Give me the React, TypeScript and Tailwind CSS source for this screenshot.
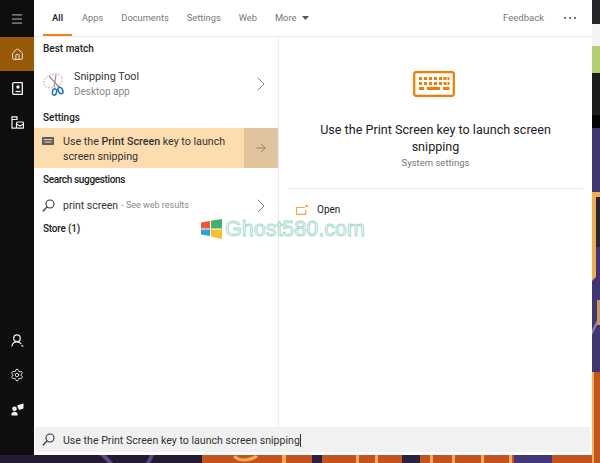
import React from "react";
import { Menu, Home, Settings, ChevronRight, ArrowRight } from "lucide-react";

function Wallpaper() {
  return (
    <svg className="absolute inset-0" width="600" height="463" viewBox="0 0 600 463">
      <rect width="600" height="463" fill="#c4541f" />
      <rect x="0" y="455" width="202" height="8" fill="#231a33" />
      <path d="M100 455l8 8h5l-7-8zM150 455l-4 8h4l4-8z" fill="#5b4a86" />
      <rect x="592" y="0" width="8" height="24" fill="#26262a" />
      <rect x="592" y="24" width="8" height="22" fill="#f4f4f4" />
      <rect x="592" y="46" width="8" height="27" fill="#b4cf72" />
      <rect x="592" y="73" width="8" height="42" fill="#1d1d20" />
      <rect x="592" y="115" width="8" height="13" fill="#050505" />
      <rect x="592" y="128" width="8" height="244" fill="#3f3672" />
      <path d="M592 192h8v5h-4v80l-4 4z" fill="#eeae4e" />
      <rect x="596" y="197" width="4" height="50" fill="#2a2436" />
      <path d="M592 330l8-16v5l-8 16z" fill="#8d85a8" />
      <rect x="597" y="300" width="3" height="25" fill="#c79a58" />
      <rect x="592" y="372" width="8" height="91" fill="#c4541f" />
      <rect x="592" y="372" width="2" height="91" fill="#f3ae55" />
      <g fill="#f3ae55">
        <path d="M236 455c2 4 10 5 20 0l2 2c-8 6-20 6-25 0z" />
        <rect x="282" y="455" width="4" height="8" />
        <rect x="356" y="455" width="3" height="8" />
        <rect x="375" y="455" width="3" height="8" />
        <rect x="430" y="455" width="3" height="8" />
        <rect x="452" y="455" width="3" height="8" />
        <rect x="481" y="455" width="3" height="8" />
        <rect x="509" y="455" width="3" height="8" />
      </g>
      <g fill="#2b2140">
        <rect x="312" y="455" width="10" height="8" />
        <rect x="402" y="455" width="18" height="8" />
        <rect x="514" y="455" width="38" height="8" fill="#43367a" />
      </g>
    </svg>
  );
}

function SearchGlyph() {
  return (
    <svg width="13" height="13" viewBox="0 0 13 13" fill="none" stroke="#333" strokeWidth="1.1" className="shrink-0">
      <circle cx="8" cy="5" r="4" />
      <path d="M5.2 7.9L.8 12.3" strokeWidth="1.3" />
    </svg>
  );
}

function Scissors() {
  return (
    <svg width="22" height="24" viewBox="0 0 22 24" fill="none">
      <ellipse cx="10" cy="9" rx="9.5" ry="6.5" stroke="#d9707a" strokeWidth="0.8" strokeDasharray="1.5 1.5" transform="rotate(-20 10 9)" />
      <path d="M6 4 L16 15" stroke="#8f8f8f" strokeWidth="1.2" />
      <path d="M13 3 L11 15" stroke="#8f8f8f" strokeWidth="1.2" />
      <ellipse cx="17.5" cy="18.5" rx="2.2" ry="3.4" stroke="#1b74c5" strokeWidth="1.5" transform="rotate(-25 17.5 18.5)" />
      <ellipse cx="11.5" cy="20" rx="2" ry="3.2" stroke="#1b74c5" strokeWidth="1.5" transform="rotate(15 11.5 20)" />
    </svg>
  );
}

function KeyboardBig() {
  return (
    <svg width="42" height="26" viewBox="0 0 42 26" fill="none">
      <rect x="1.2" y="1.2" width="39.6" height="23.6" rx="2" stroke="#f57c00" strokeWidth="2.2" />
      <g fill="#f57c00">
        <rect x="6" y="6" width="3" height="3" /><rect x="11" y="6" width="3" height="3" /><rect x="16" y="6" width="3" height="3" /><rect x="21" y="6" width="3" height="3" /><rect x="26" y="6" width="3" height="3" /><rect x="30.5" y="6" width="3" height="3" /><rect x="34.5" y="6" width="2" height="3" />
        <rect x="6" y="11" width="3" height="3" /><rect x="11" y="11" width="3" height="3" /><rect x="16" y="11" width="3" height="3" /><rect x="21" y="11" width="3" height="3" /><rect x="26" y="11" width="3" height="3" /><rect x="30.5" y="11" width="3" height="3" /><rect x="34.5" y="11" width="2" height="3" />
        <rect x="6" y="16" width="5" height="3" /><rect x="14" y="16" width="13" height="3" /><rect x="30" y="16" width="6.5" height="3" />
      </g>
    </svg>
  );
}

function KeyboardSmall() {
  return (
    <svg width="12" height="8" viewBox="0 0 12 8">
      <rect width="12" height="8" rx="1" fill="#5f5a52" />
      <rect x="1.5" y="2" width="9" height="1.2" fill="#cfc6b6" />
      <rect x="2.5" y="4.6" width="7" height="1.2" fill="#cfc6b6" />
    </svg>
  );
}

function OpenIcon() {
  return (
    <svg width="12" height="10" viewBox="0 0 12 10" fill="none">
      <path d="M9 2.5H0.6V9.4H9.6V4.5" stroke="#e9ad55" strokeWidth="1.1" />
      <rect x="9.6" y="0" width="2" height="2" fill="#ee8a2a" />
    </svg>
  );
}

function Notebook() {
  return (
    <svg width="11" height="13" viewBox="0 0 11 13" fill="none" stroke="#f2f2f2" strokeWidth="1.3">
      <path d="M2 .7H10.3V12.3H2C1.2 12.3.7 11.8.7 11V2C.7 1.2 1.2.7 2 .7z" />
      <circle cx="6" cy="5" r="1.7" fill="#f2f2f2" stroke="none" />
      <path d="M3.5 9.5H8.5" />
    </svg>
  );
}

function Cards() {
  return (
    <svg width="13" height="13" viewBox="0 0 13 13" fill="none" stroke="#f2f2f2" strokeWidth="1.2">
      <path d="M1 .8H6V3.5H1zM1 3.5V12.2H5.5" />
      <rect x="5.5" y="6" width="7" height="6.2" rx="1" />
      <path d="M5.5 8L9 10l3.5-2" />
    </svg>
  );
}

function UserIcon() {
  return (
    <svg width="13" height="13" viewBox="0 0 13 13" fill="none" stroke="#f2f2f2" strokeWidth="1.2">
      <circle cx="6" cy="4.2" r="3.3" />
      <path d="M.8 12.5C1.2 9.5 3.2 7.8 6 7.8c1.8 0 3.2.7 4.2 2" />
      <path d="M10.5 11.2l1.7 1.3" />
    </svg>
  );
}

function Feedback() {
  return (
    <svg width="13" height="13" viewBox="0 0 13 13" fill="#f2f2f2">
      <path d="M0.5 12.5v-2.5l3-1.5 3 1.5v2.5z" />
      <circle cx="3.5" cy="5.8" r="2.3" />
      <path d="M6 2.5L12.5 0.5V5.5L8 7z" />
    </svg>
  );
}

function Logo() {
  return (
    <svg width="21" height="20" viewBox="0 0 21 20">
      <path d="M0 3.5L9 2V9.5H0z" fill="#ef5a2c" />
      <path d="M10 1.8L21 0V9.5H10z" fill="#3fb070" />
      <path d="M0 10.5H9V17L0 15.5z" fill="#2f9fdc" />
      <path d="M10 10.5H21V20L10 17.5z" fill="#f8bf2a" />
    </svg>
  );
}

function Section({ children, className = "" }: { children: React.ReactNode; className?: string }) {
  return <div className={`pl-[9px] text-[10px] font-medium text-[#222] leading-[14px] ${className}`}>{children}</div>;
}

export default function App() {
  return (
    <div
      className="relative w-[600px] h-[463px] overflow-hidden"
      style={{ fontFamily: "Roboto, sans-serif" }}
    >
      <Wallpaper />

      <div className="relative flex w-[592px] h-[455px]">
        <aside className="w-[34px] shrink-0 bg-[#0e0e0e] flex flex-col items-center text-[#f2f2f2]">
          <div className="h-[37px] w-full flex items-center justify-center">
            <Menu size={14} strokeWidth={1.3} />
          </div>
          <div className="h-[34px] w-full bg-[#985a08] flex items-center justify-center">
            <Home size={13} strokeWidth={1.6} />
          </div>
          <div className="h-[34px] w-full flex items-center justify-center">
            <Notebook />
          </div>
          <div className="h-[34px] w-full flex items-center justify-center">
            <Cards />
          </div>
          <div className="mt-auto mb-[39px] flex flex-col items-center gap-[21px]">
            <UserIcon />
            <Settings size={14} strokeWidth={1.5} />
            <Feedback />
          </div>
        </aside>

        <main className="flex-1 flex flex-col bg-white min-w-0">
          <header className="h-[37px] shrink-0 flex items-center border-b border-[#ececec] text-[9.3px] text-[#777]">
            <div className="relative w-[29px] ml-[9px] h-full flex items-center justify-center text-[9.5px] font-medium text-[#222]">
              All
              <span className="absolute left-0 right-0 bottom-0 h-[2.5px] bg-[#f0820f]" />
            </div>
            <span className="ml-[10px]">Apps</span>
            <span className="ml-[18px]">Documents</span>
            <span className="ml-[18px]">Settings</span>
            <span className="ml-[18px]">Web</span>
            <span className="ml-[18px]">More</span>
            <svg className="ml-[6px]" width="7" height="4" viewBox="0 0 7 4"><path d="M0 0H7L3.5 4z" fill="#555" /></svg>
            <span className="ml-auto text-[9.5px]">Feedback</span>
            <span className="ml-[20px] mr-[16px] flex gap-[3px]">
              <i className="w-[2px] h-[2px] bg-[#777]" /><i className="w-[2px] h-[2px] bg-[#777]" /><i className="w-[2px] h-[2px] bg-[#777]" />
            </span>
          </header>

          <div className="flex flex-1 min-h-0">
            <section className="w-[245px] shrink-0 border-r border-[#eeeeee] pt-[5px]">
              <Section>Best match</Section>
              <div className="h-[55px] flex items-center pl-[9px]">
                <Scissors />
                <div className="ml-[9px] flex-1">
                  <div className="text-[10.8px] leading-[15px] text-[#333]">Snipping Tool</div>
                  <div className="text-[10px] leading-[14px] text-[#888] mt-px">Desktop app</div>
                </div>
                <ChevronRight size={24} strokeWidth={0.9} className="mr-[5px] text-[#777]" />
              </div>
              <Section>Settings</Section>
              <div className="mt-[3px] h-[40px] flex bg-[#fddcb0]">
                <div className="w-[8px] shrink-0 ml-[8px] pt-[9px]"><KeyboardSmall /></div>
                <div className="ml-[13px] flex-1 text-[10.7px] leading-[15px] text-[#333] pt-[6px] whitespace-nowrap">
                  Use the <b className="font-medium">Print Screen</b> key to launch<br />screen snipping
                </div>
                <div className="w-[34px] shrink-0 ml-px bg-[#e1c39d] flex items-center justify-center">
                  <ArrowRight size={14} strokeWidth={1} className="text-[#6b5a45]" />
                </div>
              </div>
              <Section className="pt-[5px] tracking-[-0.35px]">Search suggestions</Section>
              <div className="mt-[2px] h-[33px] flex items-center pl-[8px]">
                <SearchGlyph />
                <span className="ml-[8px] text-[10.5px] text-[#333] whitespace-nowrap">print screen</span>
                <span className="ml-[3px] text-[9px] text-[#888] whitespace-nowrap">- See web results</span>
                <ChevronRight size={24} strokeWidth={0.9} className="ml-auto mr-[5px] text-[#777]" />
              </div>
              <Section className="tracking-[-0.2px]">Store (1)</Section>
            </section>

            <section className="flex-1 flex flex-col items-center min-w-0">
              <div className="mt-[34px] mr-[3px]"><KeyboardBig /></div>
              <div className="mt-[24px] w-[250px] text-center text-[12.6px] leading-[17px] text-[#222]">
                Use the Print Screen key to launch screen snipping
              </div>
              <div className="text-[9.5px] leading-[14px] text-[#777] mt-[1px]">System settings</div>
              <div className="mt-[18px] w-[295px] border-t border-[#e9e9e9]" />
              <div className="w-[295px] flex items-center pt-[14px] pl-[8px] text-[10px] text-[#222]">
                <OpenIcon />
                <span className="ml-[9px] leading-[14px]">Open</span>
              </div>
            </section>
          </div>

          <div className="h-[25px] shrink-0 mr-[2px] ml-px mb-[3px] bg-[#f1f1f1] flex items-center pl-[7px]">
            <SearchGlyph />
            <span className="ml-[8px] pt-[2px] text-[10.6px] text-[#333] whitespace-nowrap">Use the Print Screen key to launch screen snipping</span>
            <span className="w-px h-[13px] mt-[2px] bg-[#333]" />
          </div>
        </main>
      </div>

      <div className="absolute left-[201px] top-[218px] flex items-center">
        <Logo />
        <span className="ml-[3px] text-[21.5px] leading-[22px] text-white whitespace-nowrap [-webkit-text-stroke:1px_#a9dcc8]" style={{ fontFamily: '"Liberation Sans", sans-serif' }}>
          Ghost580.com
        </span>
      </div>
    </div>
  );
}
